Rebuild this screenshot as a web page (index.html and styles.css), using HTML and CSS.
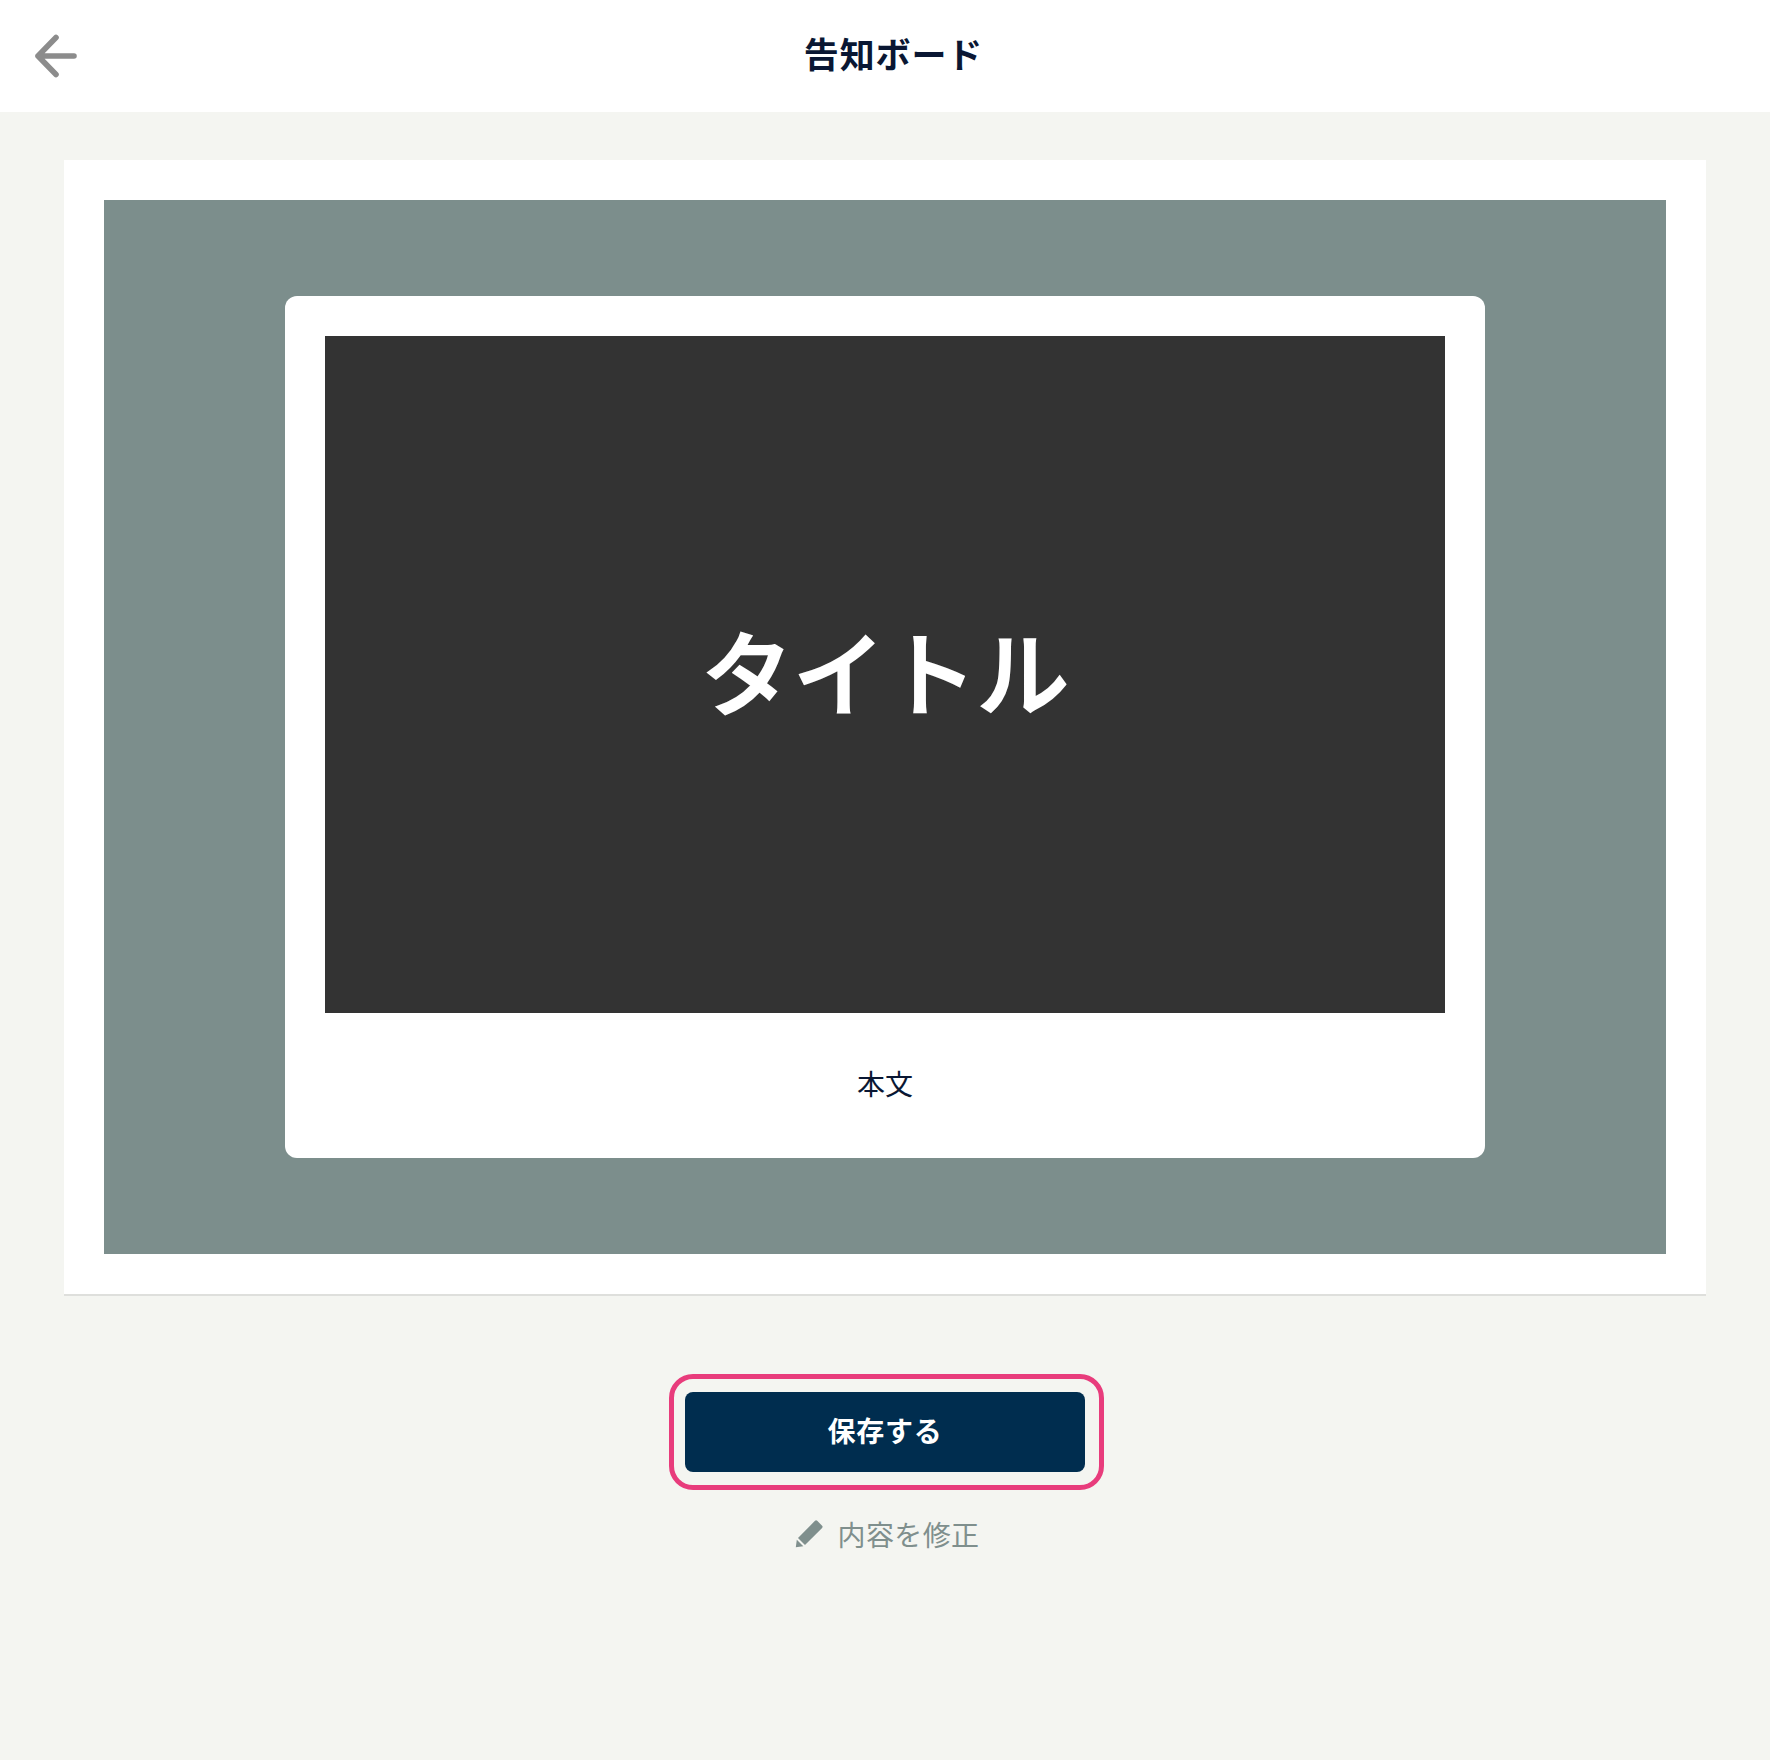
FILE: index.html
```html
<!DOCTYPE html>
<html lang="ja">
<head>
<meta charset="utf-8">
<title>告知ボード</title>
<link rel="stylesheet" href="styles.css">
</head>
<body>
<header class="topbar">
  <a class="back" href="#" aria-label="戻る">
    <svg class="back-icon" viewBox="0 0 44 44" fill="none" stroke="#8c8c8c" stroke-width="5.6" stroke-linecap="round" stroke-linejoin="round"><path d="M4 22H40M22 3.500 4 22 22 40.500"/></svg>
  </a>
  <h1 class="title">告知ボード</h1>
</header>
<main class="main">
  <section class="card">
    <div class="stage">
      <div class="panel">
        <div class="hero"><span class="hero-text">タイトル</span></div>
        <p class="body-text">本文</p>
      </div>
    </div>
  </section>
  <div class="actions">
    <div class="save-wrap">
      <button class="save">保存する</button>
      <span class="ring"></span>
    </div>
    <a class="edit" href="#">
      <svg class="edit-icon" viewBox="0 0 28 28" fill="#7f8f8d"><path d="M20 0.800a1.600 1.600 0 0 1 2.200 0l4.900 4.900a1.600 1.600 0 0 1 0 2.200L10 25 3 18zM1.800 19.700 8.300 26.200 0.800 27.300z"/></svg>
      <span>内容を修正</span>
    </a>
  </div>
</main>
</body>
</html>
```
FILE: styles.css
```css
* { box-sizing: border-box; }
html, body { margin: 0; padding: 0; }
body {
  min-height: 1760px;
  background: #f4f5f1;
  color: #0a1733;
  font-family: "Noto Sans CJK JP", "Noto Sans", sans-serif;
}
.topbar {
  height: 112px;
  background: #fff;
  display: flex;
  align-items: center;
  justify-content: center;
  position: relative;
}
.back {
  position: absolute;
  left: 34px;
  top: 34px;
  width: 44px;
  height: 44px;
  display: block;
}
.back-icon { display: block; width: 44px; height: 44px; }
.title {
  margin: 0 0 7px 17px;
  font-size: 35px;
  line-height: 1;
  font-weight: 700;
  letter-spacing: 0.9px;
  color: #0a1733;
}
.main {
  padding: 48px 64px 0;
}
.card {
  background: #fff;
  padding: 40px;
  border-bottom: 2px solid #dedfdc;
}
.stage {
  background: #7c8e8c;
  padding: 96px 0;
  display: flex;
  justify-content: center;
}
.panel {
  width: 1200px;
  background: #fff;
  border-radius: 12px;
  padding: 40px 40px 0;
}
.hero {
  height: 677px;
  background: #333;
  display: flex;
  align-items: center;
  justify-content: center;
}
.hero-text {
  color: #fff;
  font-size: 92px;
  font-weight: 500;
  -webkit-text-stroke: 2px #fff;
  line-height: 1;
  margin-bottom: 12px;
}
.body-text {
  margin: 0;
  padding-top: 49px;
  height: 145px;
  text-align: center;
  font-size: 28px;
  line-height: 42px;
}
.actions {
  display: flex;
  flex-direction: column;
  align-items: center;
  padding-top: 96px;
}
.save-wrap {
  position: relative;
  width: 400px;
  height: 80px;
}
.ring {
  position: absolute;
  inset: -18px -19px -18px -16px;
  border: 5px solid #e83c7c;
  border-radius: 24px;
}
.save {
  display: block;
  width: 400px;
  height: 80px;
  border: 0;
  border-radius: 8px;
  background: #002d4f;
  color: #fff;
  font-family: inherit;
  font-size: 28px;
  font-weight: 700;
  letter-spacing: 0.8px;
  padding: 0 0 4px;
}
.edit {
  display: flex;
  align-items: center;
  gap: 14px;
  margin-top: 41px;
  padding-left: 5px;
  color: #7f8f8d;
  font-size: 28px;
  line-height: 42px;
  letter-spacing: 0.4px;
  text-decoration: none;
}
.edit-icon { width: 28px; height: 28px; display: block; }
```
